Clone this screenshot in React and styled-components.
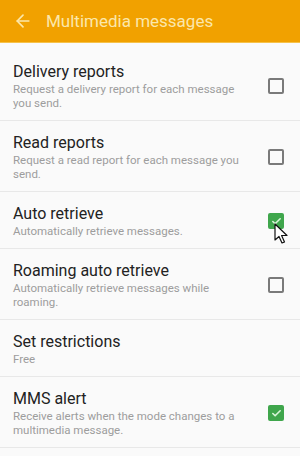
import React from "react";
import styled, { createGlobalStyle } from "styled-components";
import { ArrowLeft, Check } from "lucide-react";

const GlobalStyle = createGlobalStyle`
  html, body {
    margin: 0;
    padding: 0;
    background: #fafafa;
    font-family: Roboto, "Noto Sans", sans-serif;
  }
`;

const settings = [
  {
    title: "Delivery reports",
    summary: "Request a delivery report for each message you send.",
    checked: false,
  },
  {
    title: "Read reports",
    summary: "Request a read report for each message you send.",
    checked: false,
  },
  {
    title: "Auto retrieve",
    summary: "Automatically retrieve messages.",
    checked: true,
    pointer: true,
  },
  {
    title: "Roaming auto retrieve",
    summary: "Automatically retrieve messages while roaming.",
    checked: false,
  },
  { title: "Set restrictions", summary: "Free" },
  {
    title: "MMS alert",
    summary: "Receive alerts when the mode changes to a multimedia message.",
    checked: true,
  },
];

const Screen = styled.div`
  width: 300px;
  height: 456px;
  overflow: hidden;
  background: #fafafa;
`;

const Toolbar = styled.header`
  height: 42px;
  display: flex;
  align-items: center;
  gap: 13px;
  padding: 0 13px;
  background: #f1a100;
  border-bottom: 1px solid #f6c24a;
  color: #fbe7ab;
  font-size: 17px;
`;

const List = styled.ul`
  list-style: none;
  margin: 0;
  padding: 7px 0 0;
`;

const Row = styled.li`
  position: relative;
  display: flex;
  align-items: center;
  padding: 12px 16px 10px 13px;
  border-bottom: 1px solid #e8e8e8;
`;

const Texts = styled.div`
  flex: 1;
  padding-right: 16px;
`;

const Title = styled.div`
  font-size: 16px;
  line-height: 19px;
  color: #222;
  margin-bottom: 1px;
`;

const Summary = styled.div`
  font-size: 11.5px;
  line-height: 14px;
  color: #9d9d9d;
`;

const Box = styled.span`
  flex: none;
  width: 16px;
  height: 16px;
  box-sizing: border-box;
  border-radius: 2px;
  display: flex;
  align-items: center;
  justify-content: center;
  border: 2px solid ${(p) => (p.$on ? "#3fa64c" : "#7a7a7a")};
  background: ${(p) => (p.$on ? "#3fa64c" : "transparent")};
  color: #d8f5d8;
`;

const Pointer = styled.svg`
  position: absolute;
  left: 274px;
  top: 31px;
  width: 16px;
  height: 22px;
`;

export default function App() {
  return (
    <Screen>
      <GlobalStyle />
      <Toolbar>
        <ArrowLeft size={20} strokeWidth={2} />
        <span>Multimedia messages</span>
      </Toolbar>
      <List>
        {settings.map((s) => (
          <Row key={s.title}>
            <Texts>
              <Title>{s.title}</Title>
              <Summary>{s.summary}</Summary>
            </Texts>
            {s.checked !== undefined && (
              <Box $on={s.checked}>
                {s.checked && <Check size={11} strokeWidth={3.5} />}
              </Box>
            )}
            {s.pointer && (
              <Pointer viewBox="0 0 16 22">
                <path
                  d="M1 1 L1 17 L5 13.5 L8 20 L10.5 19 L7.6 12.5 L13 12.5 Z"
                  fill="#fff"
                  stroke="#111"
                  strokeWidth="1.2"
                  strokeLinejoin="round"
                />
              </Pointer>
            )}
          </Row>
        ))}
      </List>
    </Screen>
  );
}
